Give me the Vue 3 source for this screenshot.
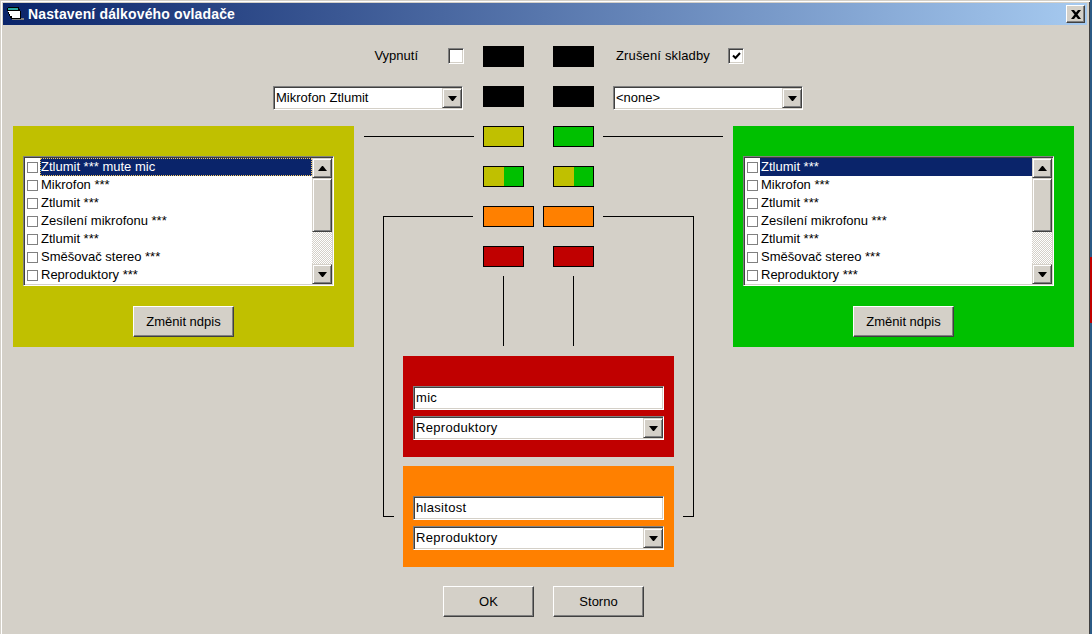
<template>
  <div class="desktop">
    <div class="window">
      <div class="titlebar">
        <svg class="app-icon" width="17" height="14" viewBox="0 0 17 14">
          <path d="M0 1h1V0h11v2h1v2h1v8H4v-1H3V9H2V7H1V4H0z" fill="#000" />
          <path d="M1 1h10v2H1z" fill="#2aa6a0" />
          <path d="M1 4h12v7H5V9H3V7H2V5H1z" fill="#fff" />
          <path d="M14 11h3v2h-3zM5 12h9v1H5z" fill="#808080" />
        </svg>
        <span class="title">Nastavení dálkového ovladače</span>
        <button class="close">
          <svg width="10" height="9" viewBox="0 0 10 9">
            <path d="M0 0h3l2 2.500L7 0h3L6.500 4.500 10 9H7L5 6.500 3 9H0l3.500-4.500z" fill="#000" />
          </svg>
        </button>
      </div>

      <div class="client">
        <div class="top-row">
          <div class="side side-left">
            <span class="check-label off-label">Vypnutí</span>
            <span class="bigcheck off-check"></span>
          </div>
          <div class="swatch-pair">
            <span class="swatch black"></span>
            <span class="swatch black"></span>
          </div>
          <div class="side side-right">
            <span class="check-label skip-label">Zrušení skladby</span>
            <span class="bigcheck">
              <svg width="9" height="8" viewBox="0 0 9 8">
                <path d="M1 3.500l2.500 2.500L8 1" fill="none" stroke="#000" stroke-width="2" />
              </svg>
            </span>
          </div>
        </div>

        <div class="top-row">
          <div class="side side-left">
            <div class="combo combo-top">
              <span class="combo-text">Mikrofon Ztlumit</span>
              <span class="combo-btn"><i class="arrow-down"></i></span>
            </div>
          </div>
          <div class="swatch-pair">
            <span class="swatch black"></span>
            <span class="swatch black"></span>
          </div>
          <div class="side side-right">
            <div class="combo combo-top">
              <span class="combo-text">&lt;none&gt;</span>
              <span class="combo-btn"><i class="arrow-down"></i></span>
            </div>
          </div>
        </div>

        <div class="middle">
          <section class="panel olive">
            <div class="listbox">
              <ul class="items">
                <li v-for="(item, i) in leftItems" :key="i" class="item" :class="{ selected: i === 0, focused: i === 0 }">
                  <span class="tick"></span>
                  <span class="item-text">{{ item }}</span>
                </li>
              </ul>
              <div class="scrollbar">
                <span class="scroll-btn"><i class="arrow-up"></i></span>
                <span class="scroll-thumb"></span>
                <span class="scroll-track"></span>
                <span class="scroll-btn"><i class="arrow-down"></i></span>
              </div>
            </div>
            <button class="btn rename">Změnit ndpis</button>
          </section>

          <div class="center">
            <svg class="wires" width="359" height="400" viewBox="0 0 359 400">
              <path d="M0 10.500H110M239 10.500H359" />
              <path d="M109 90.500H19.500V390.500H30" />
              <path d="M239 90.500H329.500V390.500H319" />
              <path d="M139.500 150V220M209.500 150V220" />
            </svg>

            <div class="swatch-row">
              <span class="swatch lined olive"></span>
              <span class="swatch lined green"></span>
            </div>
            <div class="swatch-row">
              <span class="swatch lined split"></span>
              <span class="swatch lined split"></span>
            </div>
            <div class="swatch-row tight">
              <span class="swatch lined wide orange"></span>
              <span class="swatch lined wide orange"></span>
            </div>
            <div class="swatch-row">
              <span class="swatch lined red"></span>
              <span class="swatch lined red"></span>
            </div>

            <section class="device red first">
              <div class="field">mic</div>
              <div class="combo">
                <span class="combo-text">Reproduktory</span>
                <span class="combo-btn"><i class="arrow-down"></i></span>
              </div>
            </section>
            <section class="device orange">
              <div class="field">hlasitost</div>
              <div class="combo">
                <span class="combo-text">Reproduktory</span>
                <span class="combo-btn"><i class="arrow-down"></i></span>
              </div>
            </section>

            <div class="actions">
              <button class="btn action">OK</button>
              <button class="btn action">Storno</button>
            </div>
          </div>

          <section class="panel green">
            <div class="listbox">
              <ul class="items">
                <li v-for="(item, i) in rightItems" :key="i" class="item" :class="{ selected: i === 0 }">
                  <span class="tick"></span>
                  <span class="item-text">{{ item }}</span>
                </li>
              </ul>
              <div class="scrollbar">
                <span class="scroll-btn"><i class="arrow-up"></i></span>
                <span class="scroll-thumb"></span>
                <span class="scroll-track"></span>
                <span class="scroll-btn"><i class="arrow-down"></i></span>
              </div>
            </div>
            <button class="btn rename">Změnit ndpis</button>
          </section>
        </div>
      </div>
    </div>
    <div class="behind"></div>
  </div>
</template>

<script setup>
const baseItems = [
  'Mikrofon ***',
  'Ztlumit ***',
  'Zesílení mikrofonu ***',
  'Ztlumit ***',
  'Směšovač stereo ***',
  'Reproduktory ***'
]

const leftItems = ['Ztlumit *** mute mic', ...baseItems]
const rightItems = ['Ztlumit ***', ...baseItems]
</script>

<style>
html,
body {
  margin: 0;
  background: #d4d0c8;
}
</style>

<style scoped>
.desktop {
  display: flex;
  width: 1092px;
  height: 634px;
  overflow: hidden;
}

.behind {
  flex: none;
  width: 2px;
  background: linear-gradient(180deg, #2b5a85 257px, #c00000 257px 323px, #2b5a85 323px);
}

.window {
  flex: none;
  width: 1090px;
  height: 634px;
  box-sizing: border-box;
  padding: 3px 3px 0;
  overflow: hidden;
  background: #d4d0c8;
  box-shadow: inset 0 1px 0 #d4d0c8, inset 1px 0 0 #d4d0c8, inset 0 2px 0 #fff, inset 2px 0 0 #fff, inset -1px 0 0 #404040;
  font-family: "Liberation Sans", Arial, sans-serif;
  font-size: 13px;
  color: #000;
}

.titlebar {
  display: flex;
  align-items: center;
  width: 1084px;
  box-sizing: border-box;
  height: 22px;
  padding: 0 2px 0 4px;
  background: linear-gradient(90deg, #0a246a, #a6caf0);
}

.app-icon {
  flex: none;
}

.title {
  margin-left: 4px;
  color: #fff;
  font-weight: 700;
  font-size: 14px;
  letter-spacing: 0.14px;
}

.close {
  margin-left: auto;
  width: 19px;
  height: 18px;
  padding: 0;
  display: flex;
  align-items: center;
  justify-content: center;
  background: #d4d0c8;
  border: 1px solid;
  border-color: #fff #404040 #404040 #fff;
  box-shadow: inset -1px -1px 0 #808080;
}

.client {
  padding-top: 21px;
}

.top-row {
  display: grid;
  grid-template-columns: 480px 111px 1fr;
  height: 21px;
  margin-bottom: 19px;
}

.swatch-pair {
  display: flex;
  gap: 29px;
}

.side {
  display: flex;
  align-items: flex-start;
}

.side-left {
  justify-content: flex-end;
  padding-right: 20px;
}

.side-right {
  padding-left: 19px;
}

.check-label {
  padding-top: 2px;
  line-height: 16px;
}

.off-label {
  margin-right: 30px;
}

.off-check {
  margin-right: -1px;
}

.skip-label {
  margin: 0 18px 0 3px;
  letter-spacing: 0.15px;
}

.bigcheck {
  width: 16px;
  height: 16px;
  margin-top: 2px;
  box-sizing: border-box;
  display: flex;
  align-items: center;
  justify-content: center;
  background: #fff;
  border: 1px solid;
  border-color: #808080 #fff #fff #808080;
  box-shadow: inset 1px 1px 0 #404040, inset -1px -1px 0 #d4d0c8;
}

.swatch {
  display: block;
  width: 41px;
  height: 21px;
  box-sizing: border-box;
}

.swatch.black {
  background: #000;
}

.swatch.lined {
  border: 1px solid #000;
}

.swatch.wide {
  width: 51px;
}

.olive {
  background: #c0c000;
}

.green {
  background: #00c000;
}

.orange {
  background: #ff8000;
}

.red {
  background: #c00000;
}

.split {
  background: linear-gradient(90deg, #c0c000 50%, #00c000 50%);
}

.middle {
  display: grid;
  grid-template-columns: 341px 359px 341px;
  column-gap: 10px;
  padding-left: 10px;
  align-items: start;
}

.panel {
  height: 221px;
  box-sizing: border-box;
  padding: 30px 10px 0;
  display: flex;
  flex-direction: column;
  align-items: flex-start;
}

.listbox {
  width: 311px;
  height: 130px;
  box-sizing: border-box;
  display: flex;
  padding: 1px;
  background: #fff;
  border: 1px solid;
  border-color: #808080 #fff #fff #808080;
  box-shadow: inset 1px 1px 0 #404040, inset -1px -1px 0 #d4d0c8;
}

.items {
  list-style: none;
  margin: 0;
  padding: 0;
  flex: 1;
  min-width: 0;
}

.item {
  display: flex;
  align-items: center;
  height: 18px;
  padding-left: 2px;
}

.tick {
  flex: none;
  width: 11px;
  height: 11px;
  box-sizing: border-box;
  margin-right: 2px;
  border: 1px solid #808080;
  background: #fff;
}

.item-text {
  flex: 1;
  height: 18px;
  line-height: 18px;
  padding-left: 1px;
  white-space: nowrap;
  box-sizing: border-box;
}

.selected .item-text {
  background: #0a246a;
  color: #fff;
}

.focused .item-text {
  outline: 1px dotted #f4c860;
  outline-offset: -1px;
}

.scrollbar {
  flex: none;
  width: 20px;
  display: flex;
  flex-direction: column;
}

.scroll-btn,
.scroll-thumb {
  display: flex;
  align-items: center;
  justify-content: center;
  box-sizing: border-box;
  background: #d4d0c8;
  border: 1px solid;
  border-color: #d4d0c8 #404040 #404040 #d4d0c8;
  box-shadow: inset 1px 1px 0 #fff, inset -1px -1px 0 #808080;
}

.scroll-btn {
  height: 20px;
}

.scroll-thumb {
  height: 54px;
}

.scroll-track {
  flex: 1;
  background: conic-gradient(#d4d0c8 25%, #fff 0 50%, #d4d0c8 0 75%, #fff 0) 0 0 / 2px 2px;
}

.arrow-up,
.arrow-down {
  display: block;
  width: 1px;
  height: 0;
  border-left: 4px solid transparent;
  border-right: 4px solid transparent;
}

.arrow-up {
  border-bottom: 5px solid #000;
}

.arrow-down {
  border-top: 5px solid #000;
}

.btn {
  box-sizing: border-box;
  padding: 0;
  background: #d4d0c8;
  border: 1px solid;
  border-color: #fff #404040 #404040 #fff;
  box-shadow: inset -1px -1px 0 #808080;
  font: inherit;
  color: #000;
}

.rename {
  width: 101px;
  height: 31px;
  margin: 20px 0 0 110px;
}

.center {
  position: relative;
}

.wires {
  position: absolute;
  left: 0;
  top: 0;
  fill: none;
  stroke: #000;
  stroke-width: 1;
  shape-rendering: crispEdges;
  pointer-events: none;
}

.swatch-row {
  display: flex;
  gap: 29px;
  height: 21px;
  margin-bottom: 19px;
  padding-left: 119px;
}

.swatch-row.tight {
  gap: 9px;
}

.device {
  width: 271px;
  height: 101px;
  box-sizing: border-box;
  margin-left: 39px;
  padding: 30px 10px 0;
  display: flex;
  flex-direction: column;
  gap: 6px;
  letter-spacing: 0.3px;
}

.device.first {
  margin-top: 89px;
  margin-bottom: 9px;
}

.field,
.combo {
  box-sizing: border-box;
  height: 24px;
  display: flex;
  align-items: center;
  background: #fff;
  border: 1px solid;
  border-color: #808080 #fff #fff #808080;
  box-shadow: inset 1px 1px 0 #404040, inset -1px -1px 0 #d4d0c8;
}

.field {
  padding: 0 0 2px 2px;
}

.combo {
  width: 100%;
  padding: 1px 0 1px 2px;
}

.combo-top {
  width: 190px;
}

.combo-text {
  flex: 1;
  white-space: nowrap;
  padding-bottom: 2px;
}

.combo-btn {
  flex: none;
  width: 20px;
  height: 20px;
  box-sizing: border-box;
  display: flex;
  align-items: center;
  justify-content: center;
  background: #d4d0c8;
  border: 1px solid;
  border-color: #d4d0c8 #404040 #404040 #d4d0c8;
  box-shadow: inset 1px 1px 0 #fff, inset -1px -1px 0 #808080;
}

.actions {
  display: flex;
  gap: 19px;
  margin: 19px 0 0 79px;
}

.action {
  width: 91px;
  height: 31px;
}
</style>
